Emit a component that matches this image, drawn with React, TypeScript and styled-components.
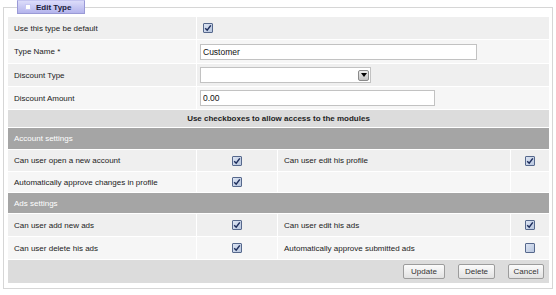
import * as React from "react";
import styled, { createGlobalStyle } from "styled-components";

const GlobalStyle = createGlobalStyle`
    html, body {
        margin: 0;
        padding: 0;
        background: #ffffff;
    }
    body {
        font-family: "Liberation Sans", Arial, sans-serif;
        font-size: 8px;
        color: #222222;
    }
`;

const Fieldset = styled.fieldset`
    box-sizing: border-box;
    width: 550px;
    margin: 0 3px;
    padding: 3px 3px 5px 4px;
    border: 1px solid #d6d6d6;
    min-width: 0;
`;

const Legend = styled.legend`
    box-sizing: border-box;
    display: flex;
    align-items: center;
    gap: 5px;
    width: 68px;
    height: 14px;
    margin-left: 9px;
    padding: 0 0 0 7px;
    background: linear-gradient(#dcdcfa, #b4b4ec);
    border: 1px solid #9a9ad6;
    border-top-color: #c4c4f0;
    font-weight: bold;
    font-size: 8px;
    color: #1a1a3a;
`;

const Bullet = styled.span`
    width: 4px;
    height: 4px;
    background: #ffffff;
    border: 1px solid #c8c8f4;
`;

const Table = styled.div`
    display: flex;
    flex-direction: column;
    gap: 1px;
    background: #ffffff;
`;

const Row = styled.div<{ $cols?: string; $h: number }>`
    display: grid;
    grid-template-columns: ${p => p.$cols || "1fr"};
    gap: 1px;
    height: ${p => p.$h}px;
`;

const Cell = styled.div<{ $bg?: string; $center?: boolean }>`
    display: flex;
    align-items: center;
    justify-content: ${p => (p.$center ? "center" : "flex-start")};
    padding: 0 ${p => (p.$center ? "0" : "6px")};
    background: ${p => p.$bg || "#f0f0f0"};
    min-width: 0;
`;

const FieldCell = styled(Cell)`
    padding-left: 3px;
`;

const Notice = styled.div`
    display: flex;
    align-items: center;
    justify-content: center;
    background: #dcdcdc;
    font-weight: bold;
    color: #1e1e1e;
`;

const SectionHeader = styled.div`
    display: flex;
    align-items: center;
    padding-left: 6px;
    background: #a5a5a5;
    color: #ffffff;
`;

const TextInput = styled.input<{ $w: number }>`
    box-sizing: border-box;
    width: ${p => p.$w}px;
    height: 16px;
    margin: 0;
    padding: 0 2px;
    border: 1px solid #c2c2c2;
    background: #ffffff;
    font-family: "Liberation Sans", Arial, sans-serif;
    font-size: 8.5px;
    color: #111111;
    outline: none;
`;

const SelectBox = styled.div`
    box-sizing: border-box;
    display: flex;
    align-items: center;
    justify-content: flex-end;
    width: 171px;
    height: 16px;
    padding-right: 1px;
    border: 1px solid #c2c2c2;
    background: #ffffff;
`;

const SelectArrow = styled.span`
    box-sizing: border-box;
    display: flex;
    align-items: center;
    justify-content: center;
    width: 11px;
    height: 11px;
    border: 1px solid #8a8a8a;
    border-radius: 2px;
    background: linear-gradient(#ececec, #c4c4c4);

    &::after {
        content: "";
        border-left: 3px solid transparent;
        border-right: 3px solid transparent;
        border-top: 4px solid #000000;
    }
`;

const Box = styled.span`
    box-sizing: border-box;
    display: inline-flex;
    align-items: center;
    justify-content: center;
    width: 10px;
    height: 10px;
    border: 1px solid #56688c;
    border-radius: 1px;
    background: linear-gradient(135deg, #dce4f2, #b8c6de);
`;

const Footer = styled.div`
    display: flex;
    align-items: center;
    justify-content: flex-end;
    gap: 13px;
    padding-right: 5px;
    background: #dcdcdc;
`;

const Button = styled.button<{ $w: number }>`
    box-sizing: border-box;
    width: ${p => p.$w}px;
    height: 15px;
    margin: 0;
    padding: 0;
    border: 1px solid #9c9c9c;
    border-radius: 2px;
    background: linear-gradient(#fbfbfb, #e2e2e2);
    font-family: "Liberation Sans", Arial, sans-serif;
    font-size: 8px;
    color: #333333;
`;

const CheckBox: React.FC<{ checked?: boolean }> = ({ checked }) => (
    <Box>
        {checked && (
            <svg width="8" height="8" viewBox="0 0 8 8">
                <path d="M1.2 4.2 L3.2 6.2 L6.8 1.4" fill="none" stroke="#1d2d5c" strokeWidth="1.5" />
            </svg>
        )}
    </Box>
);

const ROW_DARK = "#efefef";
const ROW_LIGHT = "#f6f6f6";
const PERM_COLS = "188px 80px 232px 1fr";

interface Permission {
    label: string;
    checked: boolean;
}

const permRow = (left: Permission, right: Permission | null, bg: string, h: number) => (
    <Row $cols={PERM_COLS} $h={h}>
        <Cell $bg={bg}>{left.label}</Cell>
        <Cell $bg={bg} $center><CheckBox checked={left.checked} /></Cell>
        <Cell $bg={bg}>{right ? right.label : ""}</Cell>
        <Cell $bg={bg} $center>{right && <CheckBox checked={right.checked} />}</Cell>
    </Row>
);

export default function App() {
    return <>
        <GlobalStyle />
        <Fieldset>
            <Legend><Bullet />Edit Type</Legend>
            <Table>
                <Row $cols="188px 1fr" $h={22}>
                    <Cell $bg={ROW_DARK}>Use this type be default</Cell>
                    <Cell $bg={ROW_DARK}><CheckBox checked /></Cell>
                </Row>
                <Row $cols="188px 1fr" $h={23}>
                    <Cell $bg={ROW_LIGHT}>Type Name *</Cell>
                    <FieldCell $bg={ROW_LIGHT}><TextInput $w={277} defaultValue="Customer" /></FieldCell>
                </Row>
                <Row $cols="188px 1fr" $h={22}>
                    <Cell $bg={ROW_DARK}>Discount Type</Cell>
                    <FieldCell $bg={ROW_DARK}><SelectBox><SelectArrow /></SelectBox></FieldCell>
                </Row>
                <Row $cols="188px 1fr" $h={22}>
                    <Cell $bg={ROW_LIGHT}>Discount Amount</Cell>
                    <FieldCell $bg={ROW_LIGHT}><TextInput $w={235} defaultValue="0.00" /></FieldCell>
                </Row>
                <Row $h={17}>
                    <Notice>Use checkboxes to allow access to the modules</Notice>
                </Row>
                <Row $h={21}>
                    <SectionHeader>Account settings</SectionHeader>
                </Row>
                {permRow(
                    { label: "Can user open a new account", checked: true },
                    { label: "Can user edit his profile", checked: true },
                    ROW_DARK, 21
                )}
                {permRow(
                    { label: "Automatically approve changes in profile", checked: true },
                    null,
                    ROW_LIGHT, 20
                )}
                <Row $h={20}>
                    <SectionHeader>Ads settings</SectionHeader>
                </Row>
                {permRow(
                    { label: "Can user add new ads", checked: true },
                    { label: "Can user edit his ads", checked: true },
                    ROW_DARK, 22
                )}
                {permRow(
                    { label: "Can user delete his ads", checked: true },
                    { label: "Automatically approve submitted ads", checked: false },
                    ROW_LIGHT, 22
                )}
                <Row $h={23}>
                    <Footer>
                        <Button $w={42}>Update</Button>
                        <Button $w={37}>Delete</Button>
                        <Button $w={36}>Cancel</Button>
                    </Footer>
                </Row>
            </Table>
        </Fieldset>
    </>;
}
